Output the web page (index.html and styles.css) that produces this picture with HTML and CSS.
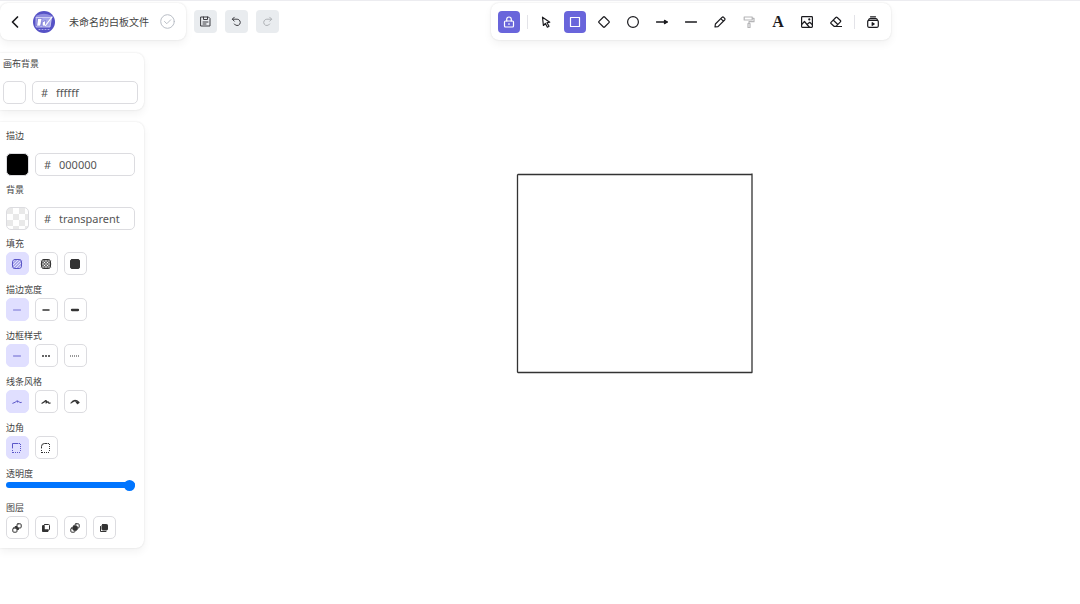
FILE: index.html
```
<!DOCTYPE html>
<html lang="zh-CN">
<head>
    <meta charset="UTF-8">
    <meta name="viewport" content="width=device-width, initial-scale=1.0">
    <title>未命名的白板文件</title>
    <link rel="stylesheet" href="styles.css">
</head>
<body>
    <svg class="canvas" aria-label="画布">
        <path d="M518 174.500L752 174.500M752 174L752 372M752 372.500L518 372.500M517.500 372L517.500 175"/>
    </svg>

    <header class="header">
        <div class="header-left">
            <div class="file-bar">
                <button class="back" aria-label="返回">
                    <svg width="10" height="14" viewBox="0 0 10 14"><path d="M7.500 2L2.500 7l5 5" stroke-width="1.700"/></svg>
                </button>
                <svg class="logo" width="22" height="22" viewBox="0 0 22 22">
                    <circle class="logo-bg" cx="11" cy="11" r="11"/>
                    <path class="logo-wave" d="M3.500 4.500Q11 1 18 4.500L20 7H2z"/>
                    <path class="logo-panel" d="M3.500 6.500H18.500L17 16H3.500z"/>
                    <path class="logo-mark" d="M5 7.500h4L7.500 15H4zM9.500 11l3-1.500V15h-3z"/>
                    <path class="logo-line" d="M12.500 14.500L19 6"/>
                    <path class="logo-dots" d="M6 18.500h10"/>
                </svg>
                <span class="file-name">未命名的白板文件</span>
                <svg class="saved" width="15" height="15" viewBox="0 0 15 15"><circle cx="7.500" cy="7.500" r="6.800"/><path d="M4.500 7.500l2.300 2.200 3.900-3.900"/></svg>
            </div>
            <button class="action" aria-label="保存">
                <svg width="11" height="11" viewBox="0 0 11 11"><path d="M1 1h7.500L10 2.500V10H1zM3.500 1v2.500h4V1M3 6h5M3 8h3"/></svg>
            </button>
            <button class="action" aria-label="撤销">
                <svg width="11" height="11" viewBox="0 0 11 11"><path d="M3.300 1.200L1.300 3.200l2 2M1.500 3.200h4.700a3.200 3.200 0 1 1-2.900 4.800"/></svg>
            </button>
            <button class="action" aria-label="重做" disabled>
                <svg width="11" height="11" viewBox="0 0 11 11"><path d="M7.700 1.200l2 2-2 2M9.500 3.200H4.800a3.200 3.200 0 1 0 2.900 4.800"/></svg>
            </button>
        </div>

        <div class="header-center">
            <div class="toolbar">
                <button class="tool active" aria-label="锁定">
                    <svg width="12" height="12" viewBox="0 0 12 12"><rect x="1.500" y="5" width="9" height="6" rx="1"/><path d="M3.700 5V3.300a2.300 2.300 0 0 1 4.600 0V5M6 7.500v1"/></svg>
                </button>
                <span class="divider"></span>
                <button class="tool" aria-label="选择">
                    <svg width="12" height="12" viewBox="0 0 12 12"><path d="M2.500 1.200l.9 8.300 2-2 2 3.700 1.600-.9-2-3.600 2.800-.5z"/></svg>
                </button>
                <button class="tool active" aria-label="矩形">
                    <svg width="12" height="12" viewBox="0 0 12 12"><rect x="1.500" y="1.500" width="9" height="9"/></svg>
                </button>
                <button class="tool" aria-label="菱形">
                    <svg width="12" height="12" viewBox="0 0 12 12"><path d="M5.400 1q.6-.6 1.200 0l4.400 4.400q.6.600 0 1.200L6.600 11q-.6.600-1.200 0L1 6.600q-.6-.6 0-1.200z"/></svg>
                </button>
                <button class="tool" aria-label="椭圆">
                    <svg width="12" height="12" viewBox="0 0 12 12"><circle cx="6" cy="6" r="5.400"/></svg>
                </button>
                <button class="tool" aria-label="箭头">
                    <svg width="12" height="12" viewBox="0 0 12 12"><path d="M.5 6h10.500" stroke-width="1.500"/><path class="solid" d="M8.500 4.300L11.300 6 8.500 7.700z"/></svg>
                </button>
                <button class="tool" aria-label="线条">
                    <svg width="12" height="12" viewBox="0 0 12 12"><path d="M.5 6h11" stroke-width="1.500"/></svg>
                </button>
                <button class="tool" aria-label="画笔">
                    <svg width="12" height="12" viewBox="0 0 12 12"><path d="M1 11l.4-3L8 1.400q.9-.8 1.700 0l.9.900q.8.800 0 1.700L4 10.600zM6.800 2.600l2.600 2.600"/></svg>
                </button>
                <button class="tool" aria-label="格式刷" disabled>
                    <svg width="12" height="12" viewBox="0 0 12 12"><path d="M1.200 1h8v3h-8zM9.200 2.300h1.800v3.400H6V7.500M5 7.500h2v4H5z"/></svg>
                </button>
                <button class="tool text-tool" aria-label="文字">A</button>
                <button class="tool" aria-label="图片">
                    <svg width="12" height="12" viewBox="0 0 12 12"><rect x=".6" y=".6" width="10.800" height="10.800" rx=".8"/><path d="M.6 8.500L3.500 5.500 6 8.500 8.700 6.300l2.700 2.500M6 8.500L8.200 11"/><circle class="solid" cx="8.300" cy="3.400" r=".5"/></svg>
                </button>
                <button class="tool" aria-label="橡皮擦">
                    <svg width="12" height="12" viewBox="0 0 12 12"><path d="M1 6.300l4.800-4.800q.7-.6 1.400 0l3.200 3q.6.700 0 1.300L6 10.300H4L1 7.500q-.5-.6 0-1.200zM3.400 4.200l4.200 4M6 10.500h5.500"/></svg>
                </button>
                <span class="divider"></span>
                <button class="tool" aria-label="演示">
                    <svg width="12" height="12" viewBox="0 0 12 12"><rect x=".7" y="4.300" width="10.600" height="7" rx="1.200"/><path d="M1.500 4.200Q2 2.600 3 2.600h6q1 0 1.500 1.600M3.500 .8h5"/><path class="solid" d="M5.200 6.700L7.200 8 5.200 9.300z"/></svg>
                </button>
            </div>
        </div>
    </header>

    <aside class="sidebar">
        <section class="panel canvas-panel">
            <label class="title" for="canvasColor">画布背景</label>
            <div class="color-row">
                <button class="swatch white" aria-label="画布背景颜色"></button>
                <div class="color-input"><span>#</span><input type="text" id="canvasColor" value="ffffff"></div>
            </div>
        </section>

        <section class="panel shape-panel">
            <div class="color-group">
                <label class="title" for="strokeColor">描边</label>
                <div class="color-row">
                    <button class="swatch black" aria-label="描边颜色"></button>
                    <div class="color-input"><span>#</span><input type="text" id="strokeColor" value="000000"></div>
                </div>
            </div>
            <div class="color-group">
                <label class="title" for="bgColor">背景</label>
                <div class="color-row">
                    <button class="swatch transparent" aria-label="背景颜色"></button>
                    <div class="color-input"><span>#</span><input type="text" id="bgColor" value="transparent"></div>
                </div>
            </div>

            <fieldset>
                <legend class="title">填充</legend>
                <div class="options">
                    <label class="option"><input type="radio" name="fill" aria-label="线条" checked>
                        <svg width="12" height="12" viewBox="0 0 12 12"><rect x="1.500" y="1.500" width="9" height="9" rx="2.500"/><path d="M1.500 6L6 1.500M1.500 9l7.500-7.500M3 10.500L10.500 3M6 10.500L10.500 6" stroke-width=".8"/></svg>
                    </label>
                    <label class="option"><input type="radio" name="fill" aria-label="交叉">
                        <svg width="12" height="12" viewBox="0 0 12 12"><rect x="1.500" y="1.500" width="9" height="9" rx="2.500"/><path d="M1.500 6L6 1.500M1.500 9l7.500-7.500M3 10.500L10.500 3M6 10.500L10.500 6M6 1.500L10.500 6M3 1.500L10.500 9M1.500 3L9 10.500M1.500 6L6 10.500" stroke-width=".9"/></svg>
                    </label>
                    <label class="option"><input type="radio" name="fill" aria-label="实心">
                        <svg width="12" height="12" viewBox="0 0 12 12"><rect class="solid" x="1.500" y="1.500" width="9" height="9" rx="1.500"/></svg>
                    </label>
                </div>
            </fieldset>

            <fieldset>
                <legend class="title">描边宽度</legend>
                <div class="options">
                    <label class="option"><input type="radio" name="width" aria-label="细" checked>
                        <svg width="12" height="12" viewBox="0 0 12 12"><path d="M2.500 6h7" stroke-width=".8"/></svg>
                    </label>
                    <label class="option"><input type="radio" name="width" aria-label="粗">
                        <svg width="12" height="12" viewBox="0 0 12 12"><path d="M3 6h6" stroke-width="1.500"/></svg>
                    </label>
                    <label class="option"><input type="radio" name="width" aria-label="特粗">
                        <svg width="12" height="12" viewBox="0 0 12 12"><path d="M3 6h6" stroke-width="2.300"/></svg>
                    </label>
                </div>
            </fieldset>

            <fieldset>
                <legend class="title">边框样式</legend>
                <div class="options">
                    <label class="option"><input type="radio" name="style" aria-label="实线" checked>
                        <svg width="12" height="12" viewBox="0 0 12 12"><path d="M2.500 6h7" stroke-width=".9"/></svg>
                    </label>
                    <label class="option"><input type="radio" name="style" aria-label="虚线">
                        <svg width="12" height="12" viewBox="0 0 12 12"><path class="butt" d="M2 6h8" stroke-width="1.300" stroke-dasharray="2 1"/></svg>
                    </label>
                    <label class="option"><input type="radio" name="style" aria-label="点线">
                        <svg width="12" height="12" viewBox="0 0 12 12"><path class="butt" d="M1 6h9" stroke-width="1.200" stroke-dasharray="1 1"/></svg>
                    </label>
                </div>
            </fieldset>

            <fieldset>
                <legend class="title">线条风格</legend>
                <div class="options">
                    <label class="option"><input type="radio" name="sloppiness" aria-label="朴素" checked>
                        <svg width="12" height="12" viewBox="0 0 12 12"><path d="M1.800 7.300Q4.500 6.500 6 4.800q1.200-.6.500 1.400Q8 5 8.300 6t2 .5"/></svg>
                    </label>
                    <label class="option"><input type="radio" name="sloppiness" aria-label="艺术">
                        <svg width="12" height="12" viewBox="0 0 12 12"><path d="M2 7.300Q4.500 6 5.500 4.600q1.700-.2.500 2.400Q8 5 8.300 6.300T10.200 7M3 6.500l3-1.700" stroke-width="1.200"/></svg>
                    </label>
                    <label class="option"><input type="radio" name="sloppiness" aria-label="漫画家">
                        <svg width="12" height="12" viewBox="0 0 12 12"><path d="M2 7Q4 4.300 6 4.300T10 6.500L8.300 7.700M3 6.200Q6 4 6.800 5.300T7.500 6.700L9.500 6" stroke-width="1.200"/></svg>
                    </label>
                </div>
            </fieldset>

            <fieldset>
                <legend class="title">边角</legend>
                <div class="options">
                    <label class="option"><input type="radio" name="corner" aria-label="尖锐" checked>
                        <svg width="12" height="12" viewBox="0 0 12 12"><path d="M1.500 6V1.500H7"/><path class="butt" d="M9.500 2v8M1.500 8v3M2 10.500h8M8 1.500h2" stroke-dasharray="1 1"/></svg>
                    </label>
                    <label class="option"><input type="radio" name="corner" aria-label="圆润">
                        <svg width="12" height="12" viewBox="0 0 12 12"><path d="M1.500 6V4.500Q1.500 1.500 4.500 1.500H7"/><path class="butt" d="M9.500 2v8M1.500 8v3M2 10.500h8M8 1.500h2" stroke-dasharray="1 1"/></svg>
                    </label>
                </div>
            </fieldset>

            <div class="opacity">
                <label class="title" for="opacity">透明度</label>
                <input type="range" id="opacity" min="0" max="100" step="10" value="100">
            </div>

            <div>
                <div class="title">图层</div>
                <div class="options">
                    <button class="option" aria-label="置于底层">
                        <svg width="12" height="12" viewBox="0 0 12 12"><rect x="6" y="1.800" width="4.200" height="4.200" rx="1"/><rect x="1.800" y="6" width="4.200" height="4.200" rx="1"/><path class="solid" d="M4.500 4.500h1.500V6h1.500v1.500H6V6H4.500z"/></svg>
                    </button>
                    <button class="option" aria-label="下移一层">
                        <svg width="12" height="12" viewBox="0 0 12 12"><path class="solid" d="M2.500 4v5.500H8V8H4V4z"/><rect x="4" y="2.500" width="5.500" height="5.500" rx="1"/></svg>
                    </button>
                    <button class="option" aria-label="上移一层">
                        <svg width="12" height="12" viewBox="0 0 12 12"><rect x="6" y="1.800" width="4.200" height="4.200" rx="1"/><rect x="1.800" y="6" width="4.200" height="4.200" rx="1"/><rect class="solid" x="4" y="4" width="4.200" height="4.200" rx=".8"/></svg>
                    </button>
                    <button class="option" aria-label="置于顶层">
                        <svg width="12" height="12" viewBox="0 0 12 12"><path d="M2.500 4.500v5h5.500"/><rect class="solid" x="4" y="2.500" width="5.500" height="5.500" rx=".8"/></svg>
                    </button>
                </div>
            </div>
        </section>
    </aside>
</body>
</html>
```
FILE: styles.css
```
* {
    box-sizing: border-box;
}

body {
    margin: 0;
    min-height: 100vh;
    border-top: 1px solid #ececf0;
    background: #fff;
    color: #1b1b1f;
    font-family: "Noto Sans", "Noto Sans CJK SC", sans-serif;
    font-size: 9px;
}

button {
    padding: 0;
    border: none;
    background: none;
    color: inherit;
    cursor: pointer;
}

svg {
    flex: none;
    fill: none;
    stroke: currentColor;
    stroke-linecap: round;
    stroke-linejoin: round;
}

.solid {
    fill: currentColor;
}

.butt {
    stroke-linecap: butt;
}

/* drawing surface under the panels */
.canvas {
    position: absolute;
    top: 0;
    left: 0;
    width: 100%;
    height: 100%;
    z-index: -1;
    color: #333;
    stroke-width: 1.3;
}

/* header */
.header {
    display: flex;
    align-items: center;
    padding-top: 2px;
}

.header-left {
    display: flex;
    align-items: center;
    gap: 8px;
    width: 302px;
}

.header-center {
    flex: 1;
    display: flex;
    justify-content: center;
}

.file-bar,
.toolbar,
.panel {
    background: #fff;
    border-radius: 8px;
    box-shadow: 0 0 2px rgba(0, 0, 0, 0.12), 0 4px 9px rgba(0, 0, 0, 0.05);
}

.file-bar {
    display: flex;
    align-items: center;
    width: 186px;
    height: 37px;
    padding-left: 10px;
}

.back {
    display: flex;
}

.logo {
    margin: 0 14px 0 13px;
}

.logo-bg {
    fill: #5652c6;
    stroke: none;
}

.logo-wave {
    fill: #8f8ce0;
    stroke: none;
}

.logo-panel {
    fill: #a5a5ea;
    stroke: #dcdcf8;
    stroke-width: 0.8;
}

.logo-line {
    stroke: #fff;
    stroke-width: 1.2;
}

.logo-mark {
    fill: #fff;
    stroke: #5652c6;
    stroke-width: 0.5;
}

.logo-dots {
    stroke: #aeacec;
    stroke-dasharray: 1 2;
}

.file-name {
    color: #444;
    font-size: 10px;
    white-space: nowrap;
}

.saved {
    margin-left: 11px;
    color: #b9bec6;
}

.action {
    display: flex;
    align-items: center;
    justify-content: center;
    width: 23px;
    height: 23px;
    border-radius: 4px;
    background: #e9ecef;
    color: #3d3d42;
}

.action:disabled {
    color: #aeb1b5;
}

.toolbar {
    display: flex;
    align-items: center;
    gap: 7px;
    height: 37px;
    padding: 0 7px;
}

.tool {
    display: flex;
    align-items: center;
    justify-content: center;
    width: 22px;
    height: 22px;
    border-radius: 4px;
    stroke-width: 1.2;
}

.tool.active {
    background: #6965db;
    color: #fff;
}

.tool:disabled {
    color: #b5b5b7;
}

.text-tool {
    font-family: "Liberation Serif", serif;
    font-size: 16px;
    font-weight: bold;
}

.divider {
    width: 1px;
    height: 14px;
    background: #e3e3e8;
}

/* side panels */
.sidebar {
    display: flex;
    flex-direction: column;
    gap: 12px;
    width: 144px;
    margin-top: 13px;
}

.panel {
    border-radius: 0 8px 8px 0;
}

.canvas-panel {
    padding: 5px 6px 6px 3px;
}

.shape-panel {
    padding: 8px 9px 9px 6px;
}

.title {
    display: block;
    height: 12px;
    margin-bottom: 2px;
    padding: 0;
    color: #444;
    font-size: 9px;
    line-height: 12px;
}

.color-row {
    display: flex;
    gap: 6px;
    margin-top: 11px;
}

.canvas-panel .title,
.color-group .title {
    margin-bottom: 0;
}

.color-group {
    margin-bottom: 8px;
}

.swatch {
    flex: none;
    width: 23px;
    height: 23px;
    border: 1px solid #dcdce0;
    border-radius: 5px;
}

.swatch.white {
    background: #fff;
}

.swatch.black {
    background: #000;
}

.swatch.transparent {
    background: repeating-conic-gradient(#fff 0 25%, #e9e9e9 0 50%) 0 0 / 12px 12px;
}

.color-input {
    flex: 1;
    display: flex;
    align-items: center;
    min-width: 0;
    height: 23px;
    padding-left: 8px;
    border: 1px solid #dcdce0;
    border-radius: 5px;
    color: #555;
    font-size: 11px;
}

.color-input span {
    width: 15px;
}

.color-input input {
    flex: 1;
    min-width: 0;
    padding: 0;
    border: none;
    outline: none;
    background: none;
    color: inherit;
    font: inherit;
}

fieldset {
    min-width: 0;
    margin: 0 0 9px;
    padding: 0;
    border: none;
}

.options {
    display: flex;
    gap: 6px;
}

.option {
    position: relative;
    display: flex;
    align-items: center;
    width: 23px;
    height: 23px;
    padding-left: 4px;
    border: 1px solid #dcdce0;
    border-radius: 5px;
    color: #333;
    cursor: pointer;
}

.option input {
    position: absolute;
    inset: 0;
    margin: 0;
    opacity: 0;
}

.option:has(input:checked) {
    border-color: #e0dfff;
    background: #e0dfff;
    color: #5b57c8;
}

.opacity {
    margin-bottom: 14px;
}

.opacity .title {
    margin-bottom: 0;
}

.opacity input {
    display: block;
    appearance: none;
    width: 100%;
    height: 6px;
    margin: 2px 0 0;
    border-radius: 3px;
    background: #0075ff;
}

.opacity input::-webkit-slider-thumb {
    appearance: none;
    width: 11px;
    height: 11px;
    border-radius: 50%;
    background: #0075ff;
}
```
